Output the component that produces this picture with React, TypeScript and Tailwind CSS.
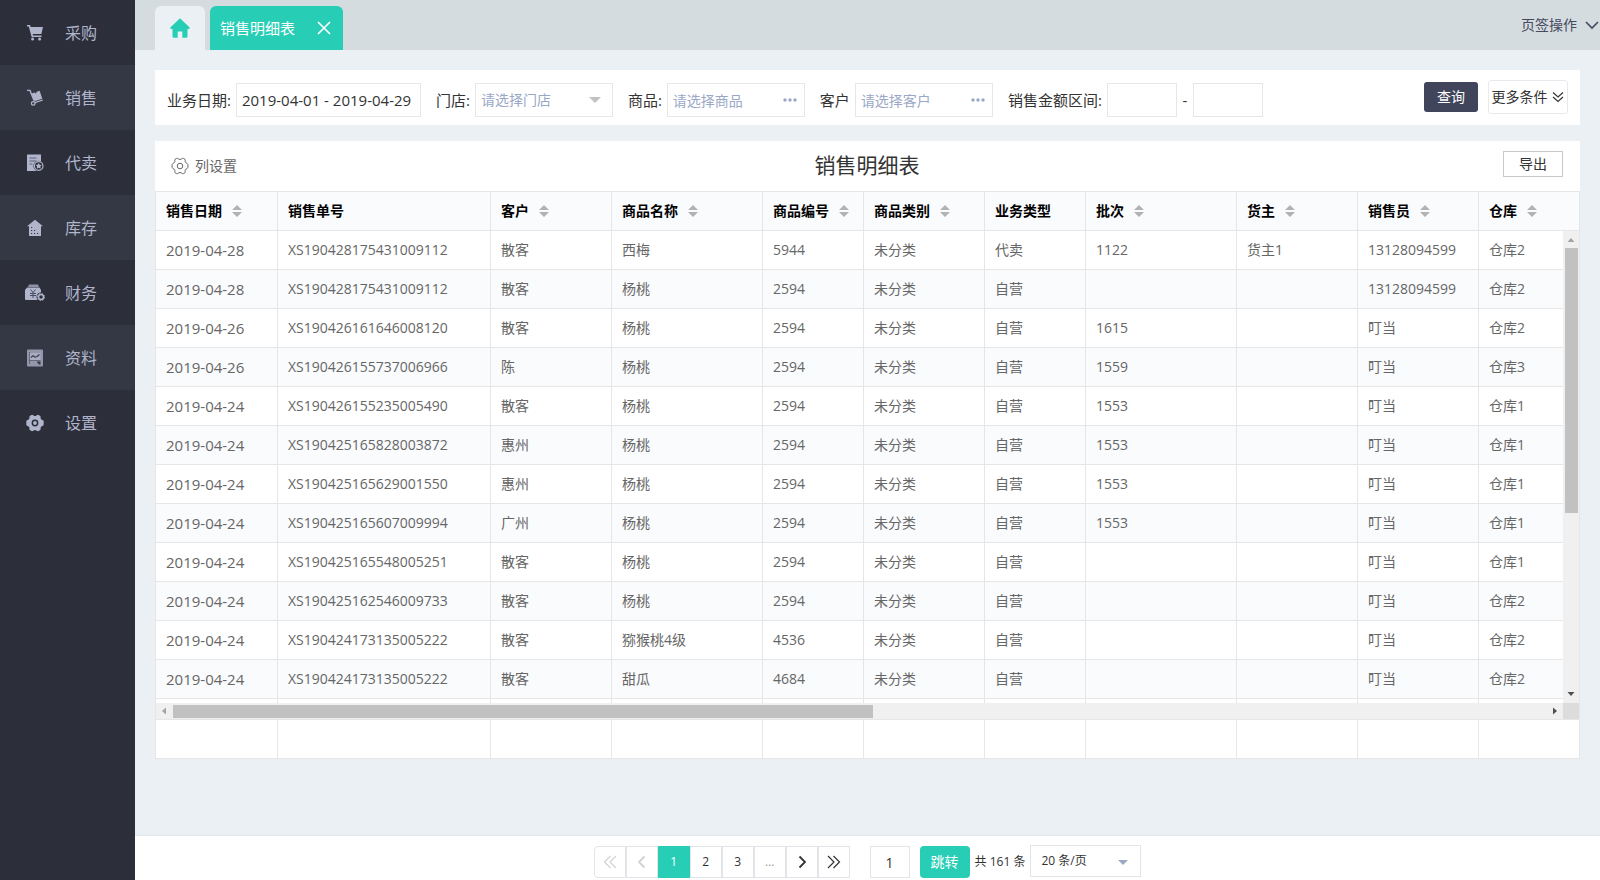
import React from 'react';

const CartIcon = () => (
  <svg viewBox="0 0 18 18" className="w-[18px] h-[18px]" fill="currentColor">
    <path d="M1 1h3l.7 2H17l-1.6 7H6.6l.4 1.6h8.6V13H5.6L2.8 2.6H1z" />
    <circle cx="6.6" cy="15" r="1.5" />
    <circle cx="13.6" cy="15" r="1.5" />
  </svg>
);

const TrolleyIcon = () => (
  <svg viewBox="0 0 18 18" className="w-[18px] h-[18px]" fill="currentColor">
    <path d="M1 1.4h3L8 11.5" fill="none" stroke="currentColor" strokeWidth="1.4" />
    <path d="M5.6 4.6l3.2-1.2.4 1.2 1.4-.5-.4-1.2 3.4-1.2 2.7 8-7.8 2.6z" />
    <path d="M9 13.6l7.8-2.6" stroke="currentColor" strokeWidth="1.2" />
    <circle cx="7.2" cy="14.4" r="1.8" fill="none" stroke="currentColor" strokeWidth="1.3" />
  </svg>
);

const ConsignIcon = () => (
  <svg viewBox="0 0 18 18" className="w-[18px] h-[18px]" fill="currentColor">
    <path d="M1 .5h14v16.500H1z" />
    <path d="M3.500 4h7M3.500 7h7M3.500 10h3" stroke="#5d6072" strokeWidth="1" />
    <circle cx="12.700" cy="12" r="5.300" fill="#2c2e3a" />
    <circle cx="12.700" cy="12" r="4.300" fill="none" stroke="currentColor" strokeWidth="1.200" />
    <path d="M12.700 8.900l1 1.900 2.100.3-1.500 1.500.4 2.100-2-1-2 1 .4-2.100-1.500-1.500 2.100-.3z" />
  </svg>
);

const StockIcon = () => (
  <svg viewBox="0 0 18 18" className="w-[18px] h-[18px]" fill="currentColor">
    <path d="M9 .8l8 6.4h-2V17H3V7.2H1z" />
    <path d="M5 8.5h1.2M5 11.5h1.2M8 11.5h1.2M5 14.5h1.2M8 14.5h1.2M11 14.5h1.2" stroke="#343844" strokeWidth="1.2" />
  </svg>
);

const FinanceIcon = () => (
  <svg viewBox="0 0 20 18" className="w-5 h-[18px]" fill="currentColor">
    <path d="M4 .5h9l1 2.500H3z" opacity=".75" />
    <path d="M2 3.500h12.500l1.500 2.500v10H1a1 1 0 0 1-1-1V6z" />
    <path d="M5.500 5.500L8 8.500l2.500-3M8 8.500V14M5 9.500h6M5 11.500h6" fill="none" stroke="#4a4d5f" strokeWidth="1" />
    <circle cx="16" cy="13" r="4.500" fill="#2c2e3a" />
    <circle cx="16" cy="13" r="2.500" fill="none" stroke="currentColor" strokeWidth="1.500" />
    <circle cx="16" cy="13" r="3.500" fill="none" stroke="currentColor" strokeWidth="1" strokeDasharray="1.500 1.250" />
  </svg>
);

const DataIcon = () => (
  <svg viewBox="0 0 18 18" className="w-[18px] h-[18px]" fill="currentColor">
    <path d="M2 .5h14a1 1 0 0 1 1 1v15a1 1 0 0 1-1 1H2a1 1 0 0 1-1-1v-15a1 1 0 0 1 1-1z" opacity=".75" />
    <path d="M3.500 4h11v7.500h-11z" opacity=".7" />
    <path d="M3.500 3v12M3 11.500h11.500" fill="none" stroke="#565a6c" strokeWidth=".8" />
    <path d="M5 8.500l2-1.800 2 1.500 2-.7 2.500-2" fill="none" stroke="#343844" strokeWidth="1.100" />
    <path d="M10.500 12.500h4V15.500h-1.500z" fill="#343844" />
  </svg>
);

const GearIcon = () => (
  <svg viewBox="0 0 18 18" className="w-[18px] h-[18px]" fill="currentColor" fillRule="evenodd">
    <path d="M5.5.9Q6.8.6 7.6 1.6Q9 2.6 10.4 1.6Q11.2.6 12.5.9L14.3 2Q14.9 2.8 14.5 4Q14.7 5.700 16.4 6Q17.6 6.3 17.7 7.5V10.5Q17.6 11.7 16.4 12Q14.7 12.3 14.5 14Q14.9 15.2 14.3 16L12.5 17.1Q11.2 17.4 10.4 16.4Q9 15.4 7.6 16.4Q6.8 17.4 5.5 17.1L3.7 16Q3.1 15.2 3.5 14Q3.3 12.3 1.6 12Q.4 11.7.3 10.5V7.5Q.4 6.3 1.6 6Q3.3 5.700 3.5 4Q3.1 2.8 3.7 2ZM9 5.6a3.4 3.4 0 1 0 0 6.8a3.4 3.4 0 1 0 0-6.8z" />
    <circle cx="9" cy="9" r="1.9" />
  </svg>
);

const HomeIcon = () => (
  <svg viewBox="0 0 20 20" className="w-5 h-5" fill="currentColor">
    <path d="M10 .3l9.7 9.3q.3 1.200-1 1.300H17.500v7.300q0 1.500-1.500 1.500h-3.700v-6.200H7.700v6.200H4q-1.500 0-1.500-1.500v-7.300H1.300q-1.300-.1-1-1.300z" />
  </svg>
);

const ColumnIcon = () => (
  <svg viewBox="0 0 18 18" className="w-[18px] h-[18px]" fill="none" stroke="currentColor">
    <path d="M5.5 1.4Q6.8 1.1 7.5 2Q9 2.9 10.5 2Q11.2 1.1 12.5 1.4L14 2.4Q14.4 3.2 14.1 4.3Q14.3 5.9 15.9 6.3L16.9 7.6V10.4L15.9 11.7Q14.3 12.1 14.1 13.7Q14.4 14.8 14 15.6L12.5 16.6Q11.2 16.9 10.5 16Q9 15.1 7.5 16Q6.8 16.9 5.5 16.6L4 15.6Q3.6 14.8 3.9 13.7Q3.7 12.1 2.1 11.7L1.1 10.4V7.6L2.1 6.3Q3.7 5.9 3.9 4.3Q3.6 3.2 4 2.4Z" />
    <circle cx="9" cy="9" r="2.8" />
  </svg>
);

const SortIcon = () => (
  <svg viewBox="0 0 10 12" className="w-[10px] h-3 text-[#b2b2b2]" fill="currentColor">
    <path d="M5 0l5 5H0zM0 7h10l-5 5z" />
  </svg>
);

const Dots = () => (
  <svg viewBox="0 0 14 4" className="w-[14px] h-1" fill="currentColor">
    <circle cx="2" cy="2" r="1.7" />
    <circle cx="7" cy="2" r="1.7" />
    <circle cx="12" cy="2" r="1.7" />
  </svg>
);

// Thin line glyphs for the close, fold and paging buttons
const LineIcon = ({ d, width = 1.2 }: { d: string; width?: number }) => (
  <svg viewBox="0 0 14 14" className="h-[14px] w-[14px]" fill="none" stroke="currentColor" strokeWidth={width}>
    <path d={d} />
  </svg>
);

const menu = [
  { label: '采购', Icon: CartIcon },
  { label: '销售', Icon: TrolleyIcon },
  { label: '代卖', Icon: ConsignIcon },
  { label: '库存', Icon: StockIcon },
  { label: '财务', Icon: FinanceIcon },
  { label: '资料', Icon: DataIcon },
  { label: '设置', Icon: GearIcon },
];

const columns = [
  { title: '销售日期', sort: true },
  { title: '销售单号', sort: false },
  { title: '客户', sort: true },
  { title: '商品名称', sort: true },
  { title: '商品编号', sort: true },
  { title: '商品类别', sort: true },
  { title: '业务类型', sort: false },
  { title: '批次', sort: true },
  { title: '货主', sort: true },
  { title: '销售员', sort: true },
  { title: '仓库', sort: true },
];

const rows = [
  ['2019-04-28', 'XS190428175431009112', '散客', '西梅', '5944', '未分类', '代卖', '1122', '货主1', '13128094599', '仓库2'],
  ['2019-04-28', 'XS190428175431009112', '散客', '杨桃', '2594', '未分类', '自营', '', '', '13128094599', '仓库2'],
  ['2019-04-26', 'XS190426161646008120', '散客', '杨桃', '2594', '未分类', '自营', '1615', '', '叮当', '仓库2'],
  ['2019-04-26', 'XS190426155737006966', '陈', '杨桃', '2594', '未分类', '自营', '1559', '', '叮当', '仓库3'],
  ['2019-04-24', 'XS190426155235005490', '散客', '杨桃', '2594', '未分类', '自营', '1553', '', '叮当', '仓库1'],
  ['2019-04-24', 'XS190425165828003872', '惠州', '杨桃', '2594', '未分类', '自营', '1553', '', '叮当', '仓库1'],
  ['2019-04-24', 'XS190425165629001550', '惠州', '杨桃', '2594', '未分类', '自营', '1553', '', '叮当', '仓库1'],
  ['2019-04-24', 'XS190425165607009994', '广州', '杨桃', '2594', '未分类', '自营', '1553', '', '叮当', '仓库1'],
  ['2019-04-24', 'XS190425165548005251', '散客', '杨桃', '2594', '未分类', '自营', '', '', '叮当', '仓库1'],
  ['2019-04-24', 'XS190425162546009733', '散客', '杨桃', '2594', '未分类', '自营', '', '', '叮当', '仓库2'],
  ['2019-04-24', 'XS190424173135005222', '散客', '猕猴桃4级', '4536', '未分类', '自营', '', '', '叮当', '仓库2'],
  ['2019-04-24', 'XS190424173135005222', '散客', '甜瓜', '4684', '未分类', '自营', '', '', '叮当', '仓库2'],
];

// Shared by the header, body and total tables so that their columns line up
const Cols = () => (
  <colgroup>
    <col className="w-[122px]" />
    <col className="w-[213px]" />
    <col className="w-[121px]" />
    <col className="w-[151px]" />
    <col className="w-[101px]" />
    <col className="w-[121px]" />
    <col className="w-[101px]" />
    <col className="w-[151px]" />
    <col className="w-[121px]" />
    <col className="w-[121px]" />
    <col />
  </colgroup>
);

const tableClass = 'w-full table-fixed border-separate border-spacing-0';
const boxClass = 'h-[34px] border border-[#e6e6e6] bg-white outline-none';

const PickerField = ({ id, label, placeholder }: { id: string; label: string; placeholder: string }) => (
  <div className="flex items-center gap-[5px]">
    <label htmlFor={id}>{label}</label>
    <div className="relative">
      <input id={id} placeholder={placeholder} className={`${boxClass} w-[138px] pl-[5px] pr-8 text-sm placeholder:text-[#9aa8c6]`} />
      <button aria-label={placeholder} className="absolute right-2 top-0 h-[34px] text-[#9aa8c6]">
        <Dots />
      </button>
    </div>
  </div>
);

const Sidebar = () => (
  <nav className="w-[135px] shrink-0 bg-[#2c2e3a] text-[#b0b5cc]">
    {menu.map(({ label, Icon }, i) => (
      <a key={label} href="#" className={`flex h-[65px] items-center pl-[25px] text-base ${i % 2 ? 'bg-[#343844]' : 'bg-[#2c2e3a]'}`}>
        <span className="flex w-5 justify-center">
          <Icon />
        </span>
        <span className="ml-5">{label}</span>
      </a>
    ))}
  </nav>
);

const TabBar = () => (
  <header className="flex h-[50px] items-end bg-[#d5dcdf] pl-5">
    <button aria-label="首页" className="flex h-11 w-[50px] items-center justify-center rounded-t-md bg-[#ebf0f4] text-[#27ceb5]">
      <HomeIcon />
    </button>
    <div className="ml-[5px] flex h-11 w-[133px] items-center justify-between rounded-t-md bg-[#27ceb5] px-3 pl-[10px] text-[15px] leading-5 text-white">
      <span>销售明细表</span>
      <button aria-label="关闭">
        <LineIcon d="M1 1l12 12M13 1L1 13" width={1.6} />
      </button>
    </div>
    <button className="ml-auto flex h-[50px] items-center gap-2 pr-px text-sm text-[#454a60]">
      页签操作
      <LineIcon d="M1 4l6 6 6-6" width={1.6} />
    </button>
  </header>
);

const FilterBar = () => (
  <section className="flex h-[55px] items-center bg-white pl-3 pr-3 text-[15px] text-[#333]">
    <div className="flex items-center gap-[15px] whitespace-nowrap pt-[5px]">
      <div className="flex items-center gap-[5px]">
        <label htmlFor="date">业务日期:</label>
        <input id="date" defaultValue="2019-04-01 - 2019-04-29" className={`${boxClass} w-[185px] pl-[5px]`} />
      </div>
      <div className="flex items-center gap-[5px]">
        <label htmlFor="store">门店:</label>
        <div className="relative">
          <select id="store" className={`${boxClass} w-[138px] appearance-none pl-[5px] text-sm text-[#9aa8c6]`}>
            <option>请选择门店</option>
          </select>
          <svg viewBox="0 0 12 6" className="pointer-events-none absolute right-3 top-[14px] h-[6px] w-3 text-[#c2c2c2]" fill="currentColor">
            <path d="M0 0h12L6 6z" />
          </svg>
        </div>
      </div>
      <PickerField id="goods" label="商品:" placeholder="请选择商品" />
      <PickerField id="customer" label="客户" placeholder="请选择客户" />
      <div className="flex items-center gap-[5px]">
        <label htmlFor="min">销售金额区间:</label>
        <input id="min" className={`${boxClass} w-[70px] px-2`} />
        <span className="w-[6px] text-center">-</span>
        <input aria-label="最大金额" className={`${boxClass} w-[70px] px-2`} />
      </div>
    </div>
    <div className="ml-auto flex items-center gap-[10px] pb-px text-sm">
      <button className="h-[30px] w-[54px] rounded-[3px] bg-[#40455c] text-white">查询</button>
      <button className="flex h-[34px] w-20 items-center justify-center gap-[3px] whitespace-nowrap rounded-[3px] border border-[#e6e9ee]">
        更多条件
        <LineIcon d="M2 2.500l5 4.500 5-4.500M2 7l5 4.500L12 7" />
      </button>
    </div>
  </section>
);

const ReportTable = () => (
  <section className="mt-4 bg-white">
    <div className="grid h-[50px] grid-cols-3 items-center pl-4 pr-[17px]">
      <button className="flex items-center gap-[6px] justify-self-start text-sm text-[#666]">
        <ColumnIcon />
        列设置
      </button>
      <h1 className="justify-self-center text-[21px] text-[#333]">销售明细表</h1>
      <button className="mb-1 h-[26px] w-[60px] justify-self-end border border-[#c9c9c9] text-sm text-[#333]">导出</button>
    </div>

    <div className="border border-[#e6e6e6]">
      <table className={tableClass}>
        <Cols />
        <thead>
          <tr className="bg-[#fafbfd]">
            {columns.map((c) => (
              <th key={c.title} className="h-[39px] border-b border-r border-[#e6e6e6] px-[10px] text-left text-sm font-bold text-black last:border-r-0">
                <span className="flex items-center gap-[10px] whitespace-nowrap">
                  {c.title}
                  {c.sort && <SortIcon />}
                </span>
              </th>
            ))}
          </tr>
        </thead>
      </table>

      <div className="flex h-[472px]">
        <div className="min-w-0 flex-1 overflow-hidden">
          <table className={tableClass}>
            <Cols />
            <tbody>
              {rows.map((row, r) => (
                <tr key={r} className={r % 2 ? 'bg-[#fafbfd]' : 'bg-white'}>
                  {row.map((cell, c) => (
                    <td
                      key={c}
                      className={`h-[39px] whitespace-nowrap border-b border-r border-[#e6e6e6] px-[10px] text-[#666] last:border-r-0 ${c === 0 ? 'text-[15px] leading-5' : 'text-sm'}`}
                    >
                      {cell}
                    </td>
                  ))}
                </tr>
              ))}
              <tr>
                {columns.map((c) => (
                  <td key={c.title} className="h-[39px] border-r border-[#e6e6e6] last:border-r-0" />
                ))}
              </tr>
            </tbody>
          </table>
        </div>
        <div className="flex w-4 shrink-0 flex-col items-center bg-[#f0f0f0]">
          <svg viewBox="0 0 16 17" className="h-[17px] w-4 text-[#a3a3a3]" fill="currentColor">
            <path d="M4.500 11h7L8 7z" />
          </svg>
          <div className="ml-px h-[265px] w-[13px] bg-[#c1c1c1]" />
          <svg viewBox="0 0 16 17" className="mt-auto h-[17px] w-4 text-[#505050]" fill="currentColor">
            <path d="M4.500 6h7L8 10z" />
          </svg>
        </div>
      </div>

      <div className="flex h-4 items-center bg-[#f0f0f0]">
        <svg viewBox="0 0 17 16" className="h-4 w-[17px] text-[#a3a3a3]" fill="currentColor">
          <path d="M10 4.500v7L6 8z" />
        </svg>
        <div className="flex flex-1">
          <div className="mt-px h-[13px] w-[51%] bg-[#c1c1c1]" />
        </div>
        <svg viewBox="0 0 17 16" className="h-4 w-[17px] text-[#505050]" fill="currentColor">
          <path d="M7 4.500v7L11 8z" />
        </svg>
        <div className="h-4 w-4 bg-[#dcdcdc]" />
      </div>

      <table className={tableClass}>
        <Cols />
        <tbody>
          <tr>
            {columns.map((c) => (
              <td key={c.title} className="h-[39px] border-r border-t border-[#e6e6e6] last:border-r-0" />
            ))}
          </tr>
        </tbody>
      </table>
    </div>
  </section>
);

const pageClass = 'flex h-8 w-8 items-center justify-center border border-[#e1e5e9]';

const Pagination = () => (
  <footer className="flex items-start justify-center border-t border-[#e2e5e8] bg-white pb-[2px] pt-[10px] text-xs text-[#333]">
    <div className="flex">
      <button aria-label="首页" className={`${pageClass} rounded-l-sm text-[#d2d2d2]`}>
        <LineIcon d="M7.500 1l-6 6 6 6M13 1L7 7l6 6" />
      </button>
      <button aria-label="上一页" className={`${pageClass} text-[#d2d2d2]`}>
        <LineIcon d="M9.500 1.500L4 7l5.500 5.500" width={1.8} />
      </button>
      <button className="h-8 w-8 bg-[#27ceb5] text-white">1</button>
      <button className={pageClass}>2</button>
      <button className={pageClass}>3</button>
      <span className={`${pageClass} text-[#999]`}>…</span>
      <button aria-label="下一页" className={pageClass}>
        <LineIcon d="M4.500 1.500L10 7l-5.500 5.500" width={1.8} />
      </button>
      <button aria-label="尾页" className={pageClass}>
        <LineIcon d="M1 1l6 6-6 6M6.500 1l6 6-6 6" />
      </button>
    </div>
    <input aria-label="页码" defaultValue="1" className="ml-5 h-8 w-10 border border-[#e1e5e9] text-center text-sm outline-none" />
    <button className="ml-[10px] h-8 w-[50px] rounded-sm bg-[#27ceb5] text-sm text-white">跳转</button>
    <span className="ml-[5px] flex h-8 items-center whitespace-nowrap">共 161 条</span>
    <div className="relative -mt-px ml-[5px]">
      <select aria-label="每页条数" className="h-8 w-[111px] appearance-none border border-[#e1e5e9] bg-white pl-[10px] outline-none">
        <option>20 条/页</option>
      </select>
      <svg viewBox="0 0 10 5" className="pointer-events-none absolute right-[13px] top-[15px] h-[5px] w-[10px] text-[#9aa8c6]" fill="currentColor">
        <path d="M0 0h10L5 5z" />
      </svg>
    </div>
  </footer>
);

export default function App() {
  return (
    <div className="flex min-h-screen bg-[#ebf0f4] font-['Open_Sans','Noto_Sans_CJK_SC',sans-serif]">
      <Sidebar />
      <div className="flex min-w-0 flex-1 flex-col">
        <TabBar />
        <main className="flex-1 p-5">
          <FilterBar />
          <ReportTable />
        </main>
        <Pagination />
      </div>
    </div>
  );
}
